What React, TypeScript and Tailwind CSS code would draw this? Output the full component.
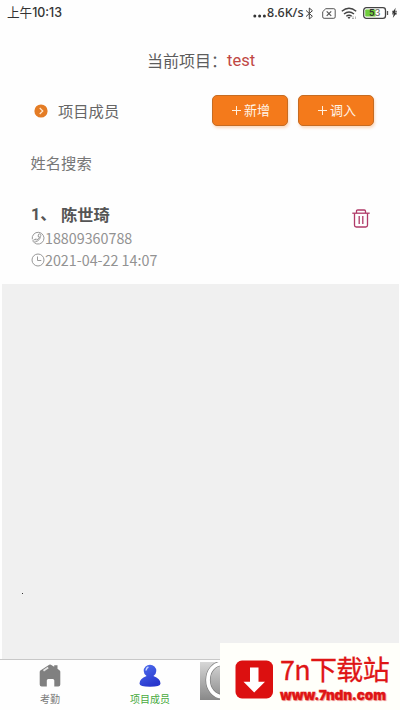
import React from "react";

const cjk = "font-['Noto_Sans_CJK_SC',sans-serif]";

function StatusBar() {
  return (
    <div className="flex h-[26px] items-center pl-[7px] pr-[2px] text-[#333]">
      <span className="flex items-center whitespace-nowrap font-['Inter','Noto_Sans_CJK_SC',sans-serif] text-[12.400px] font-medium leading-[26px]"><span className="text-[12.600px] font-normal">上午</span>10:13</span>
      <div className="ml-auto flex h-full items-center">
        <svg className="mt-[6px]" width="14" height="4" viewBox="0 0 14 4" fill="#333">
          <circle cx="1.8" cy="2" r="1.5" />
          <circle cx="6.6" cy="2" r="1.5" />
          <circle cx="11.4" cy="2" r="1.5" />
        </svg>
        <span className="w-[38px] whitespace-nowrap font-['Noto_Sans',sans-serif] text-[12.500px] font-medium leading-[26px]">8.6K/s</span>
        <svg width="9" height="13" viewBox="0 0 9 13" fill="none" stroke="#444" strokeWidth="1">
          <path d="M1 3.4 7.4 9.3 4.3 12V1l3.1 2.7L1 9.6" />
        </svg>
        <svg className="ml-[8px]" width="14" height="11" viewBox="0 0 14 11" fill="none" stroke="#555" strokeWidth="1">
          <path d="M3.8.7h8a1.4 1.4 0 0 1 1.4 1.4v6.8a1.4 1.4 0 0 1-1.4 1.4H2.1A1.4 1.4 0 0 1 .7 8.900V3.700z" />
          <path d="m4.700 3.300 4.500 4.500m0-4.500L4.700 7.800" strokeWidth="1.200" />
        </svg>
        <svg className="ml-[5px]" width="17" height="13" viewBox="0 0 17 13" fill="none" stroke="#444" strokeWidth="1.400">
          <path d="M.8 4.300q7.200-6.200 14.400 0M3 7q5-4.100 10 0M5.300 9.300q2.700-2.100 5.400 0" />
          <path d="m6.500 10.300 1.500 1.600 1.500-1.600q-1.500-1-3 0z" fill="#444" stroke="none" />
          <path d="M12 9v3m-1-1 1 1 1-1M14.500 12V9.500" stroke="#999" strokeWidth=".7" />
        </svg>
        <svg className="ml-[5px]" width="27" height="12" viewBox="0 0 27 12">
          <rect x=".7" y=".7" width="21.800" height="10.600" rx="2.600" fill="#fff" stroke="#444" strokeWidth="1.300" />
          <path d="M3 2.500h9.500v7H3a.8.800 0 0 1-.8-.8V3.300A.8.800 0 0 1 3 2.500z" fill="#70cd3d" />
          <path d="M24.500 4v4" stroke="#555" strokeWidth="1.300" />
          <text x="6" y="9.300" className="font-['Inter',sans-serif]" fontSize="9" fontWeight="600" fill="#333">5<tspan fontWeight="500" fill="#666">3</tspan></text>
        </svg>
        <svg className="ml-[1px]" width="7" height="12" viewBox="0 0 7 12">
          <path d="M4.600.8 1 6.200h1.900L1.800 11 5.900 5.500H3.900z" fill="#333" />
          <path d="M1 4.300h5M1 6.900h5" stroke="#333" strokeWidth=".8" />
        </svg>
      </div>
    </div>
  );
}

function ActionButton({ label }: { label: string }) {
  return (
    <button className="flex h-[31px] w-[76px] items-center justify-center rounded-[5px] border border-[#c66c22] bg-[#f47a1b] pb-[1px] pl-[1px] text-[13px] text-[#fff4e8] shadow-[1px_2px_3px_rgba(244,122,27,0.28)]">
      <svg className="mr-[2px]" width="11" height="11" viewBox="0 0 11 11" stroke="#fff0df" strokeWidth="1">
        <path d="M5.500 1v9M1 5.500h9" />
      </svg>
      {label}
    </button>
  );
}

function PhoneIcon() {
  return (
    <svg width="14" height="14" viewBox="0 0 14 14" fill="none" stroke="#999" strokeWidth="1">
      <path d="M1.300 8.300A5.900 5.900 0 1 1 3.300 11.700" />
      <path d="M7.600 3.200c1.500-.8 2.700.3 2.200 1.500-.3.800-1 .8-1.300 1.400-.5 1.400-1.400 2.300-2.700 2.800-.8.300-1-.4-1.700-.4-1.900.2-3.100 1.600-1.700 2.300 3 .8 6.700-1.900 7.200-5.400" />
      <path d="M7.600 3.200 7 5.300l1.300.8M3.700 8.600l1.600-.8" />
    </svg>
  );
}

function ClockIcon() {
  return (
    <svg width="14" height="14" viewBox="0 0 14 14" fill="none" stroke="#999" strokeWidth="1">
      <circle cx="7" cy="7" r="6" />
      <path d="M6.500 3.500v4h3.800" />
    </svg>
  );
}

function TrashIcon() {
  return (
    <svg width="18" height="19" viewBox="0 0 18 19" fill="none" stroke="#b03a68" strokeWidth="1.300">
      <path d="M.3 4.200h17.400" />
      <path d="M4.500 4V2.200Q4.500 1 5.700 1h6.600q1.200 0 1.200 1.200V4" />
      <path d="M2.500 4.200v12q0 1.800 1.800 1.800h9.400q1.800 0 1.800-1.800v-12M7.200 7v8M10.800 7v8" />
    </svg>
  );
}

function Watermark() {
  return (
    <div className="absolute bottom-0 right-0 flex h-[67px] w-[180px] bg-[#fffffa] pl-[15px] pt-[17px]">
      <svg width="39" height="39" viewBox="0 0 39 39">
        <rect x=".5" y=".5" width="37.500" height="38" rx="6.500" fill="#dc1010" />
        <path d="M15 7.500h8.500v14.300H30L19.200 32.500 8.500 21.800H15z" fill="#fff" />
      </svg>
      <div className="ml-[6px] -mt-[9px] text-[#df1515]">
        <div className={`${cjk} flex h-[35px] items-center whitespace-nowrap text-[27px] font-normal leading-[35px] tracking-[-0.700px] [-webkit-text-stroke:0.3px_#df1515]`}>7n下载站</div>
        <div className="mt-[1px] whitespace-nowrap font-['Inter',sans-serif] text-[13.500px] font-black leading-[16px] tracking-[-0.100px] [-webkit-text-stroke:0.3px_#df1515] [text-shadow:1px_1px_1px_#ef9a95]">www.7ndn.com</div>
      </div>
    </div>
  );
}

export default function App() {
  return (
    <div className={`relative flex h-[710px] w-[400px] flex-col overflow-hidden bg-[#fefefe] ${cjk}`}>
      <StatusBar />
      <main className="flex h-[258px] flex-col">
        <h1 className="mt-[20px] flex h-[28px] items-center whitespace-nowrap pl-[147px] text-[16px] text-[#5d5d5d]">
          当前项目：<span className="pt-[2px] font-['Roboto',sans-serif] text-[16.500px] text-[#c04744]">test</span>
        </h1>
        <div className="mt-[21px] flex h-[31px] items-center pl-[34px] pr-[26px]">
          <svg width="14" height="14" viewBox="0 0 14 14" fill="none">
            <circle cx="7" cy="7" r="6.600" fill="#e47c25" />
            <path d="m5.700 4 3.100 3-3.100 3" stroke="#ffe8cf" strokeWidth="1.200" />
          </svg>
          <h2 className="ml-[10px] text-[15.300px] text-[#666]">项目成员</h2>
          <div className="ml-auto flex gap-[10px]">
            <ActionButton label="新增" />
            <ActionButton label="调入" />
          </div>
        </div>
        <div className="mt-[25px] flex h-[22px] items-center pl-[30.500px] text-[15.300px] text-[#777]">姓名搜索</div>
        <div className="mt-[29px] flex justify-between pl-[31px] pr-[30px]">
          <div>
            <h3 className="flex h-[25px] items-center text-[16.300px] font-bold text-[#555]">
              <span className="w-[30px] whitespace-nowrap"><span className="font-['Roboto',sans-serif]">1</span>、</span>陈世琦
            </h3>
            <div className="flex h-[22px] items-center text-[14.300px] text-[#929292]"><PhoneIcon />18809360788</div>
            <div className="flex h-[22px] items-center text-[14.300px] text-[#929292]"><ClockIcon /><span className="whitespace-nowrap">2021-04-22 14:07</span></div>
          </div>
          <div className="mt-[7px]"><TrashIcon /></div>
        </div>
      </main>
      <section className="ml-[2px] mr-[1px] h-[375px] bg-[#f0f0f0] pl-[20px] pt-[309px]">
        <div className="h-[1px] w-[1px] bg-[#333]" />
      </section>
      <nav className="flex h-[51px] border-t border-[#c8c8c8]">
        <div className="flex w-[100px] flex-col items-center pt-[4px] text-[10px] leading-[15px] text-[#777]">
          <svg width="22" height="24" viewBox="0 0 22 24">
            <path d="M1 6.800 10.200.8q.8-.5 1.700 0l3.300 2V1.300h3.300v3.500l2.200 1.700q.6.500.6 1.300v12.800q0 2-2 2h-4V16.500q0-1.500-1.500-1.500H9.300Q7.800 15 7.800 16.500v6.100H2.700q-2 0-2-2V8z" fill="#808080" />
            <path d="m4.500 6.800 4.700-3.300" stroke="#e5e5e5" strokeWidth="1.700" />
          </svg>
          <span className="mt-[3px]">考勤</span>
        </div>
        <div className="flex w-[100px] flex-col items-center pt-[4px] text-[10px] leading-[15px] text-[#48aa3d]">
          <svg width="22" height="24" viewBox="0 0 22 24">
            <defs>
              <linearGradient id="person" x1="0" y1="0" x2=".5" y2="1">
                <stop stopColor="#5070ef" />
                <stop offset="1" stopColor="#2837cd" />
              </linearGradient>
            </defs>
            <path d="M7.600 12Q4.700 10 4.700 7a6.300 6.300 0 0 1 12.600 0Q17.300 10 14.400 12q7.100 2.500 7.100 7.500 0 3.300-10.500 3.300T.5 19.500Q.5 14.500 7.600 12z" fill="url(#person)" />
            <path d="M7 6.500q.3-2.700 2.400-3.500" fill="none" stroke="#c9d5ff" strokeWidth="1.500" />
          </svg>
          <span className="mt-[3px]">项目成员</span>
        </div>
        <div className="w-[40px] pt-[2px]">
          <svg width="40" height="38" viewBox="0 0 40 38">
            <defs>
              <linearGradient id="tile" x2="0" y2="1">
                <stop stopColor="#d7d7d7" />
                <stop offset="1" stopColor="#888" />
              </linearGradient>
            </defs>
            <rect width="40" height="38" fill="url(#tile)" />
            <ellipse cx="22" cy="18" rx="14" ry="16.500" fill="none" stroke="#777" strokeWidth="5" />
            <ellipse cx="22" cy="18" rx="14" ry="16.500" fill="none" stroke="#fff" strokeWidth="3.800" />
          </svg>
        </div>
      </nav>
      <Watermark />
    </div>
  );
}
